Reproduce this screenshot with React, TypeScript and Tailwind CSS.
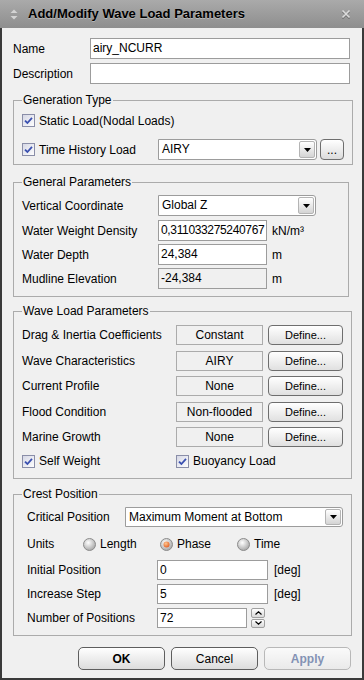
import React from 'react'

// Small Windows-style controls for the wave load dialog

function Check() {
  return (
    <svg width="13" height="13" viewBox="0 0 13 13" className="shrink-0">
      <defs>
        <linearGradient id="cbg" x1="0" y1="0" x2="1" y2="1">
          <stop offset="0" stopColor="#d4d6e4" />
          <stop offset="1" stopColor="#ffffff" />
        </linearGradient>
      </defs>
      <rect x="0.5" y="0.5" width="12" height="12" fill="url(#cbg)" stroke="#8a8ea8" />
      <path d="M3 6.6 L5.4 9 L10 3.9" fill="none" stroke="#3a50b0" strokeWidth="1.8" />
    </svg>
  )
}

function Radio({ on }: { on?: boolean }) {
  return (
    <svg width="13" height="13" viewBox="0 0 13 13" className="shrink-0">
      <defs>
        <radialGradient id="rg" cx="0.4" cy="0.35" r="0.75">
          <stop offset="0" stopColor="#ffffff" />
          <stop offset="1" stopColor="#9c9c9c" />
        </radialGradient>
        <radialGradient id="ro" cx="0.4" cy="0.35" r="0.75">
          <stop offset="0" stopColor="#ffc890" />
          <stop offset="1" stopColor="#e0541a" />
        </radialGradient>
      </defs>
      <circle cx="6.5" cy="6.5" r="6" fill="url(#rg)" stroke="#8c8c8c" />
      {on && <circle cx="6.5" cy="6.5" r="3" fill="url(#ro)" />}
    </svg>
  )
}

function Select({ value, className }: { value: string; className: string }) {
  return (
    <div className={`flex items-stretch rounded-r-[3px] border border-[#9c9c9c] bg-white ${className}`}>
      <span className="flex-1 overflow-hidden whitespace-nowrap px-[3px] leading-[18px]">{value}</span>
      <div className="m-[1px] flex w-[16px] items-center justify-center rounded-[2px] border border-[#b4b4b4] bg-gradient-to-b from-white to-[#d4d4d4]">
        <svg width="7" height="4" viewBox="0 0 7 4">
          <path d="M0 0H7L3.5 4Z" fill="#000" />
        </svg>
      </div>
    </div>
  )
}

function Field({ value, className, disabled }: { value: string; className: string; disabled?: boolean }) {
  return (
    <div
      className={`overflow-hidden whitespace-nowrap border border-[#9c9c9c] px-[2px] leading-[19px] ${
        disabled ? 'bg-[#f0f0f0]' : 'bg-white'
      } ${className}`}
    >
      {value}
    </div>
  )
}

function WaveRow({ label, value }: { label: string; value: string }) {
  return (
    <div className="flex h-[20px] items-center">
      <span className="w-[154px] whitespace-nowrap">{label}</span>
      <div className="h-full w-[87px] border border-[#ababab] bg-[#f0f0f0] text-center leading-[18px]">{value}</div>
      <button className="ml-[5px] h-full w-[75px] rounded-[4px] border border-[#6e6e6e] bg-gradient-to-b from-white to-[#e0e0e0] text-[11px] leading-[18px]">
        Define...
      </button>
    </div>
  )
}

function Group({ title, className, children }: { title: string; className: string; children: React.ReactNode }) {
  return (
    <fieldset className={`mr-[1px] border border-[#ababab] px-[8px] ${className}`}>
      <legend className="px-[1px] leading-[14px]">{title}</legend>
      {children}
    </fieldset>
  )
}

export default function App() {
  return (
    <div className="flex h-[680px] w-[364px] flex-col bg-[#3a3a3a] font-['Liberation_Sans',Arial,sans-serif] text-[12px] text-black">
      {/* Title bar */}
      <div className="flex h-[28px] shrink-0 items-center bg-gradient-to-b from-[#aaaaaa] to-[#8e8e8e] pl-[10px] pr-[13px]">
        <svg width="8" height="11" viewBox="0 0 8 11" className="mr-[10px]">
          <path d="M4 0.5 L7.5 4 H0.5Z" fill="#d4d4d4" />
          <path d="M4 10.5 L7.5 7 H0.5Z" fill="#d4d4d4" />
        </svg>
        <span className="flex-1 text-[13px] font-bold [text-shadow:0_1px_0_rgba(255,255,255,0.35)]">
          Add/Modify Wave Load Parameters
        </span>
        <svg width="10" height="10" viewBox="0 0 10 10">
          <path d="M1.5 2.5 L8.5 9.5 M8.5 2.5 L1.5 9.5" stroke="#6a6a6a" strokeWidth="1.6" />
          <path d="M1.5 1.5 L8.5 8.5 M8.5 1.5 L1.5 8.5" stroke="#dcdcdc" strokeWidth="1.6" />
        </svg>
      </div>

      {/* Body */}
      <div className="mx-[2px] mb-[2px] flex-1 bg-[#f0f0f0] pl-[11px] pr-[12px] pt-[10px]">
        <div className="flex h-[21px] items-center">
          <span className="w-[77px]">Name</span>
          <Field value="airy_NCURR" className="h-full flex-1" />
        </div>
        <div className="mt-[4px] flex h-[21px] items-center">
          <span className="w-[77px]">Description</span>
          <Field value="" className="h-full flex-1" />
        </div>

        <Group title="Generation Type" className="mt-[9px] pb-[4px] pt-[3px]">
          <div className="flex h-[21px] items-center gap-[4px]">
            <Check />
            <span>Static Load(Nodal Loads)</span>
          </div>
          <div className="mt-[8px] flex h-[21px] items-center">
            <div className="flex w-[136px] items-center gap-[4px]">
              <Check />
              <span>Time History Load</span>
            </div>
            <Select value="AIRY" className="h-full w-[159px]" />
            <button className="ml-[3px] h-full w-[24px] rounded-[4px] border border-[#6e6e6e] bg-gradient-to-b from-white to-[#dcdcdc] leading-[14px]">
              ...
            </button>
          </div>
        </Group>

        <Group title="General Parameters" className="mt-[10px] pb-[7px] pt-[6px]">
          <div className="flex h-[21px] items-center">
            <span className="w-[136px]">Vertical Coordinate</span>
            <Select value="Global Z" className="h-full w-[158px]" />
          </div>
          <div className="mt-[4px] flex h-[21px] items-center">
            <span className="w-[136px]">Water Weight Density</span>
            <Field value="0,311033275240767" className="h-full w-[109px] tracking-[-0.35px]" />
            <span className="ml-[5px]">kN/m³</span>
          </div>
          <div className="mt-[3px] flex h-[21px] items-center">
            <span className="w-[136px]">Water Depth</span>
            <Field value="24,384" className="h-full w-[109px]" />
            <span className="ml-[5px]">m</span>
          </div>
          <div className="mt-[3px] flex h-[21px] items-center">
            <span className="w-[136px]">Mudline Elevation</span>
            <Field value="-24,384" className="h-full w-[109px]" disabled />
            <span className="ml-[5px]">m</span>
          </div>
        </Group>

        <Group title="Wave Load Parameters" className="mt-[7px] pb-[9px] pt-[7px]">
          <div className="flex flex-col gap-[5.5px]">
            <WaveRow label="Drag & Inertia Coefficients" value="Constant" />
            <WaveRow label="Wave Characteristics" value="AIRY" />
            <WaveRow label="Current Profile" value="None" />
            <WaveRow label="Flood Condition" value="Non-flooded" />
            <WaveRow label="Marine Growth" value="None" />
          </div>
          <div className="mt-[6px] flex h-[16px] items-center">
            <div className="flex w-[154px] items-center gap-[4px]">
              <Check />
              <span>Self Weight</span>
            </div>
            <div className="flex items-center gap-[4px]">
              <Check />
              <span>Buoyancy Load</span>
            </div>
          </div>
        </Group>

        <Group title="Crest Position" className="mt-[8px] pb-[7px] pt-[6px]">
          <div className="pl-[5px]">
            <div className="flex h-[20px] items-center">
              <span className="w-[98px]">Critical Position</span>
              <Select value="Maximum Moment at Bottom" className="h-full w-[218px]" />
            </div>
            <div className="mt-[9px] flex h-[16px] items-center">
              <span className="w-[56px]">Units</span>
              <div className="flex w-[77px] items-center gap-[4px]">
                <Radio />
                <span>Length</span>
              </div>
              <div className="flex w-[77px] items-center gap-[4px]">
                <Radio on />
                <span>Phase</span>
              </div>
              <div className="flex items-center gap-[4px]">
                <Radio />
                <span>Time</span>
              </div>
            </div>
            <div className="mt-[8px] flex h-[20px] items-center">
              <span className="w-[130px]">Initial Position</span>
              <Field value="0" className="h-full w-[111px]" />
              <span className="ml-[6px]">[deg]</span>
            </div>
            <div className="mt-[4px] flex h-[20px] items-center">
              <span className="w-[130px]">Increase Step</span>
              <Field value="5" className="h-full w-[111px]" />
              <span className="ml-[6px]">[deg]</span>
            </div>
            <div className="mt-[4px] flex h-[20px] items-center">
              <span className="w-[130px]">Number of Positions</span>
              <Field value="72" className="h-full w-[90px]" />
              <div className="ml-[4px] flex h-full w-[14px] flex-col gap-[1px]">
                <div className="flex flex-1 items-center justify-center rounded-[2px] border border-[#a0a0a0] bg-gradient-to-b from-white to-[#dadada]">
                  <svg width="7" height="4" viewBox="0 0 7 4">
                    <path d="M0.5 3.5 L3.5 0.8 L6.5 3.5" fill="none" stroke="#000" strokeWidth="1.2" />
                  </svg>
                </div>
                <div className="flex flex-1 items-center justify-center rounded-[2px] border border-[#a0a0a0] bg-gradient-to-b from-white to-[#dadada]">
                  <svg width="7" height="4" viewBox="0 0 7 4">
                    <path d="M0.5 0.5 L3.5 3.2 L6.5 0.5" fill="none" stroke="#000" strokeWidth="1.2" />
                  </svg>
                </div>
              </div>
            </div>
          </div>
        </Group>

        <div className="mr-[-1px] mt-[11px] flex justify-end gap-[6px]">
          <button className="h-[23px] w-[87px] rounded-[5px] border border-[#5e5e5e] bg-gradient-to-b from-white to-[#dcdcdc] font-bold">
            OK
          </button>
          <button className="h-[23px] w-[87px] rounded-[5px] border border-[#5e5e5e] bg-gradient-to-b from-white to-[#dcdcdc]">
            Cancel
          </button>
          <button className="h-[23px] w-[87px] rounded-[5px] border border-[#b8b8b8] bg-gradient-to-b from-[#fafafa] to-[#eaeaea] font-bold text-[#8392b4]">
            Apply
          </button>
        </div>
      </div>
    </div>
  )
}
